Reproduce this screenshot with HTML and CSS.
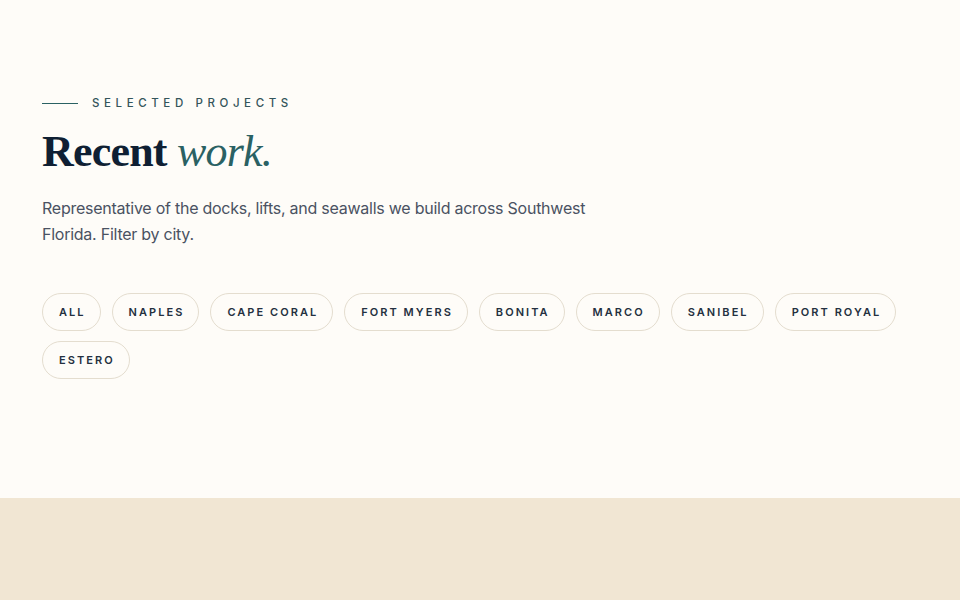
FILE: index.html
```html
<!DOCTYPE html>
<html lang="en">
<head>
<meta charset="utf-8">
<title>Recent work</title>
<link rel="stylesheet" href="styles.css">
</head>
<body>
<section class="work">
  <div class="eyebrow"><span class="rule"></span><span class="eyebrow-text">SELECTED PROJECTS</span></div>
  <h2 class="title">Recent <em>work.</em></h2>
  <p class="lede">Representative of the docks, lifts, and seawalls we build across Southwest Florida. Filter by city.</p>
  <div class="filters">
    <button class="chip">ALL</button>
    <button class="chip">NAPLES</button>
    <button class="chip">CAPE CORAL</button>
    <button class="chip">FORT MYERS</button>
    <button class="chip">BONITA</button>
    <button class="chip">MARCO</button>
    <button class="chip">SANIBEL</button>
    <button class="chip">PORT ROYAL</button>
    <button class="chip">ESTERO</button>
  </div>
</section>
<section class="next"></section>
</body>
</html>
```
FILE: styles.css
```css
* { box-sizing: border-box; }
html, body { margin: 0; padding: 0; }
body {
  background: #fefcf8;
  font-family: Inter, "Noto Sans", sans-serif;
  color: #1e2a3a;
}
.work {
  height: 498px;
  padding: 96px 42px 0;
}
.eyebrow {
  display: flex;
  align-items: center;
  gap: 14px;
  height: 14px;
}
.rule {
  display: block;
  width: 36px;
  height: 1px;
  background: #2a6163;
}
.eyebrow-text {
  font-size: 11.5px;
  font-weight: 500;
  letter-spacing: 4.6px;
  color: #34545a;
}
.title {
  margin: 16px 0 0;
  font-family: "Liberation Serif", "DejaVu Serif", serif;
  font-weight: 700;
  font-size: 44px;
  line-height: 52px;
  letter-spacing: -0.8px;
  color: #0f1f33;
}
.title em {
  font-style: italic;
  font-weight: 400;
  color: #2a6163;
}
.lede {
  margin: 17px 0 0;
  max-width: 560px;
  font-size: 16px;
  line-height: 26px;
  color: #4a5262;
  letter-spacing: -0.25px;
}
.filters {
  margin-top: 46px;
  display: flex;
  flex-wrap: wrap;
  gap: 10px 11px;
  max-width: 880px;
}
.chip {
  height: 38px;
  padding: 0 14px 0 16px;
  border: 1px solid #e4ddcf;
  border-radius: 19px;
  background: transparent;
  font-family: Inter, "Noto Sans", sans-serif;
  font-size: 11px;
  font-weight: 600;
  letter-spacing: 2.05px;
  color: #243040;
}
.next {
  height: 102px;
  background: #f1e6d3;
}
```
